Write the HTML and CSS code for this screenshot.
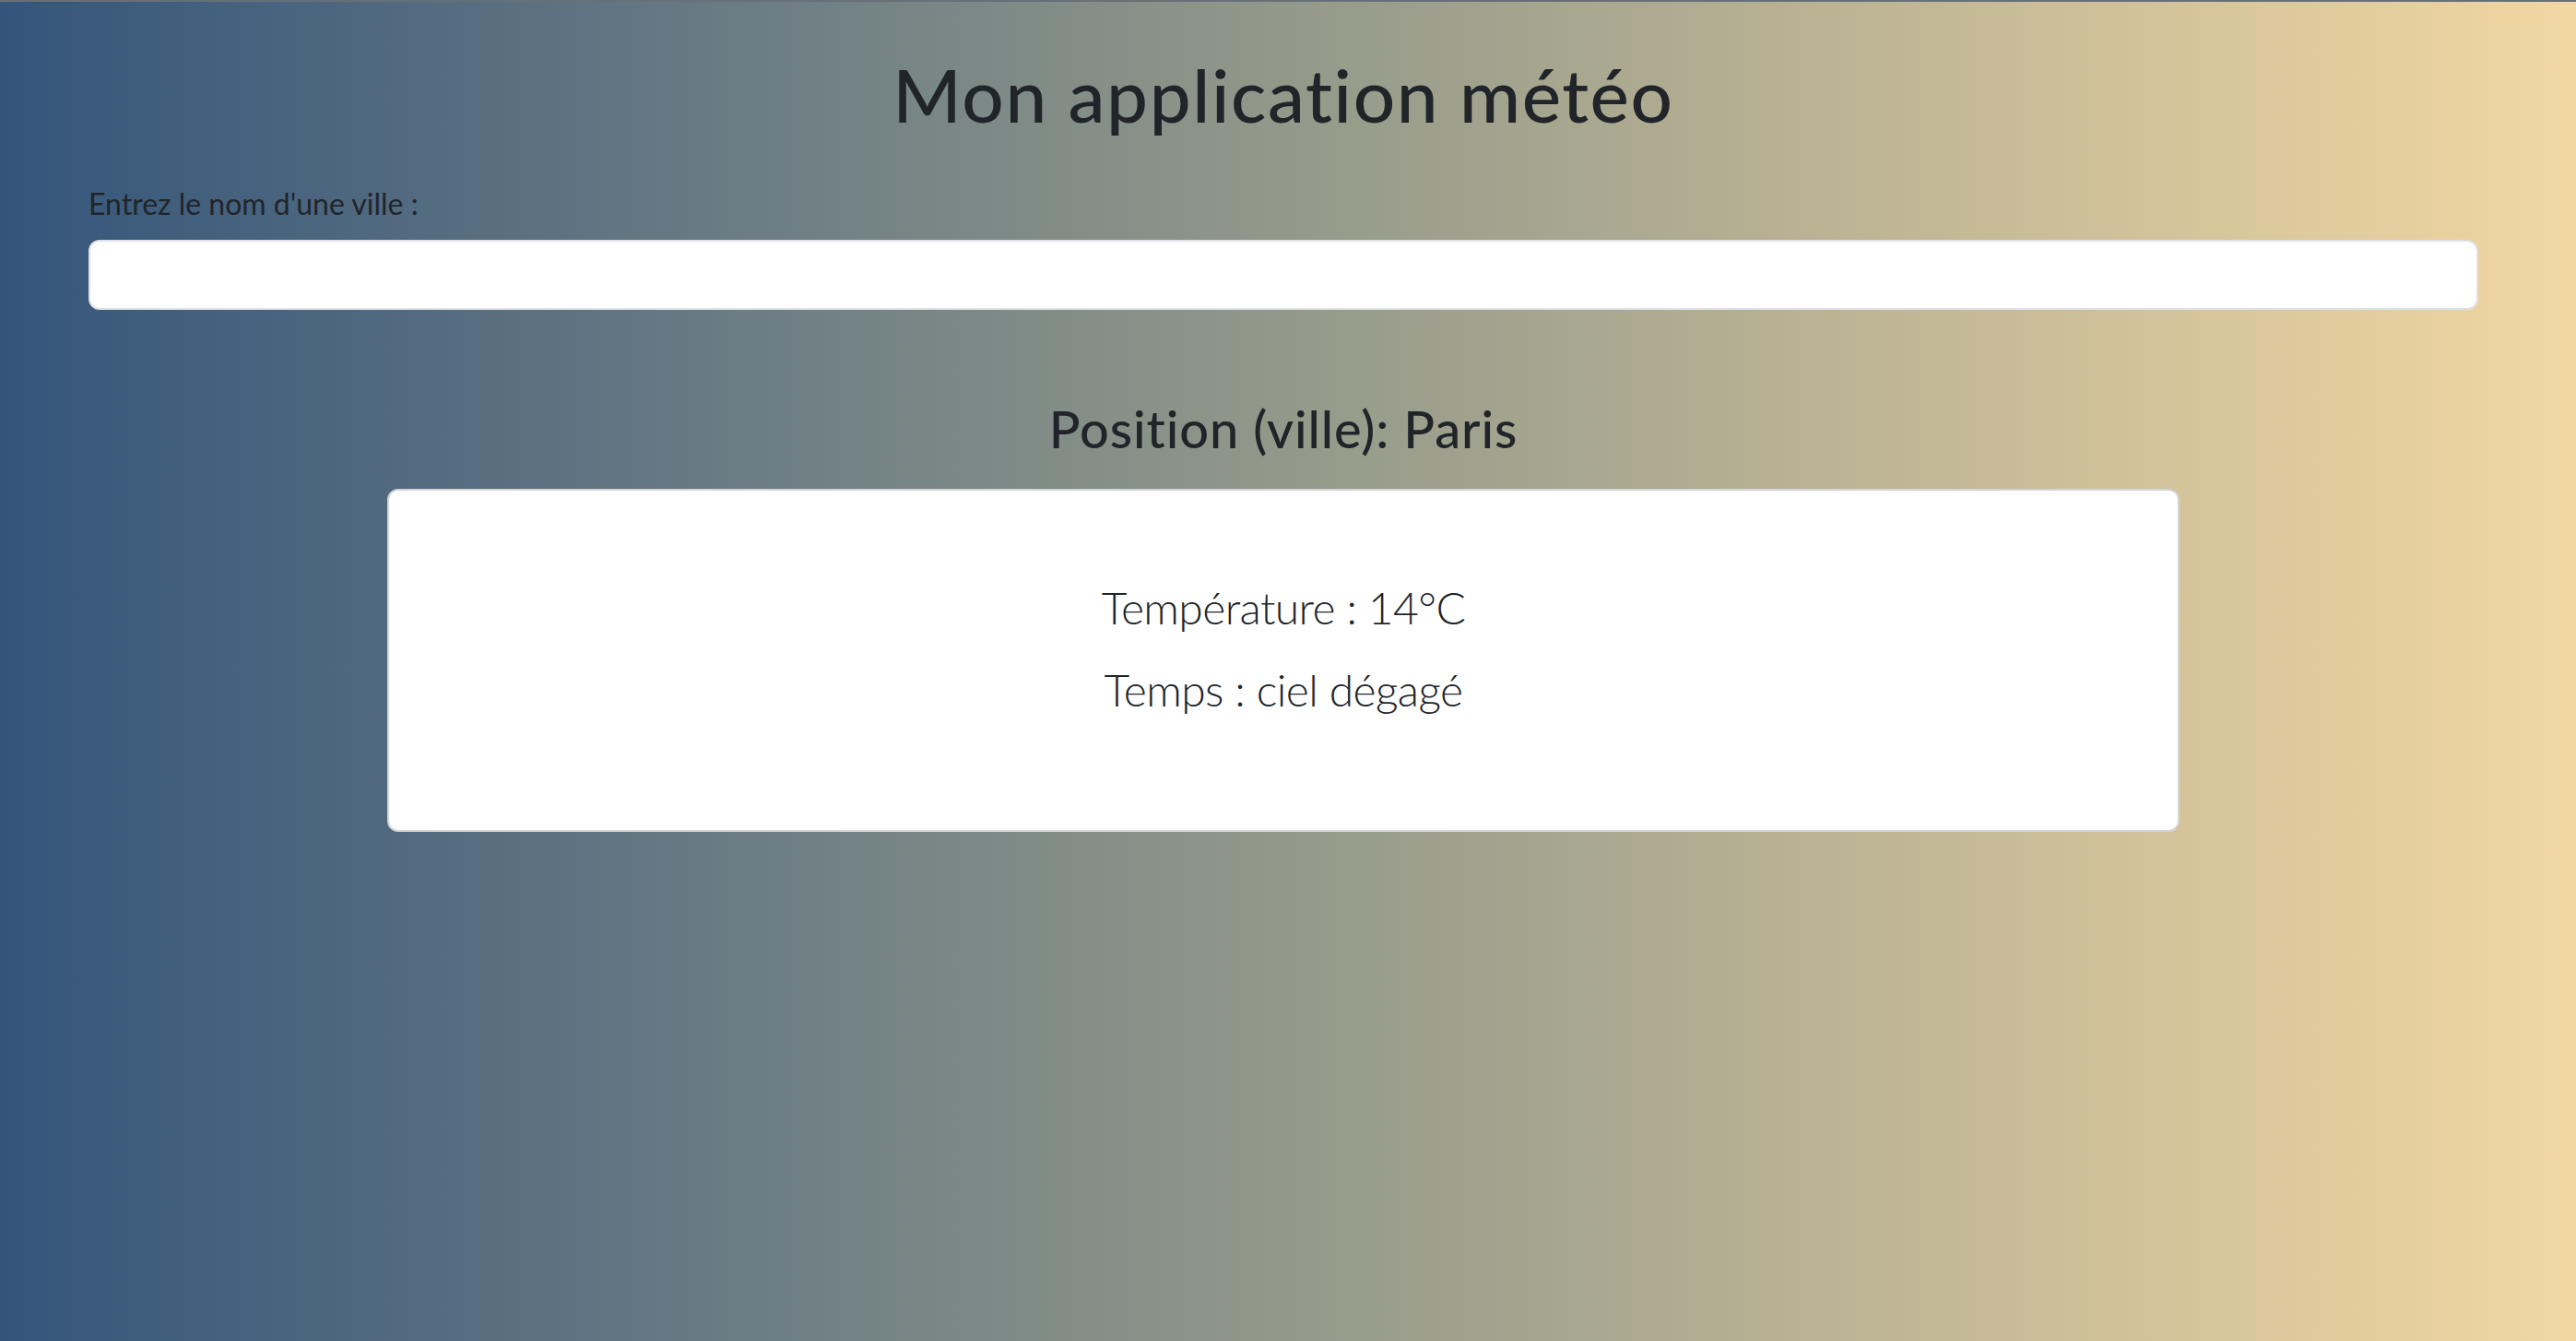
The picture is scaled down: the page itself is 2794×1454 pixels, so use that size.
FILE: index.html
```html
<!DOCTYPE html>
<html lang="fr">
<head>
<meta charset="utf-8">
<title>Mon application météo</title>
<link rel="stylesheet" href="styles.css">
</head>
<body>
<div class="page">
  <h1 class="title">Mon application météo</h1>
  <div class="search">
    <label class="search-label" for="city">Entrez le nom d'une ville :</label>
    <input class="search-input" id="city" type="text">
  </div>
  <section class="result">
    <h3 class="result-title">Position (ville): Paris</h3>
    <div class="card">
      <p class="card-line">Température : 14°C</p>
      <p class="card-line">Temps : ciel dégagé</p>
    </div>
  </section>
</div>
</body>
</html>
```

FILE: styles.css
```css
html, body {
  margin: 0;
  padding: 0;
}
body {
  min-height: 1452px;
  border-top: 2px solid #677079;
  background: linear-gradient(90deg, #34557b 0%, #93998a 50%, #f2d7a2 100%);
  font-family: Lato, "Open Sans", sans-serif;
  font-variant-ligatures: none;
  color: #212529;
}
.page {
  padding: 0 106px 0 96px;
  display: flex;
  flex-direction: column;
}
.title {
  margin: 52px 0 0;
  font-size: 80px;
  font-weight: 500;
  line-height: 1.2;
  letter-spacing: 1.6px;
  text-align: center;
}
.search {
  display: flex;
  flex-direction: column;
  margin-top: 47px;
}
.search-label {
  font-size: 32px;
  line-height: 1.5;
  margin-bottom: 15px;
}
.search-input {
  box-sizing: border-box;
  height: 76px;
  border: 2px solid #dee2e6;
  border-radius: 12px;
  background: #fff;
  font-size: 32px;
  padding: 0 24px;
  outline: none;
}
.result {
  display: flex;
  flex-direction: column;
  align-items: center;
  margin-top: 95px;
}
.result-title {
  margin: 0 0 32px;
  font-size: 56px;
  font-weight: 500;
  line-height: 1.2;
  letter-spacing: 0.9px;
  text-align: center;
}
.card {
  box-sizing: border-box;
  width: 75%;
  height: 372px;
  background: #fff;
  border: 2px solid #d3d4d6;
  border-radius: 12px;
  display: flex;
  flex-direction: column;
  align-items: center;
  padding-top: 91px;
  gap: 17px;
}
.card-line {
  margin: 0;
  font-size: 48px;
  font-weight: 300;
  line-height: 1.5;
  letter-spacing: -0.6px;
}
```
